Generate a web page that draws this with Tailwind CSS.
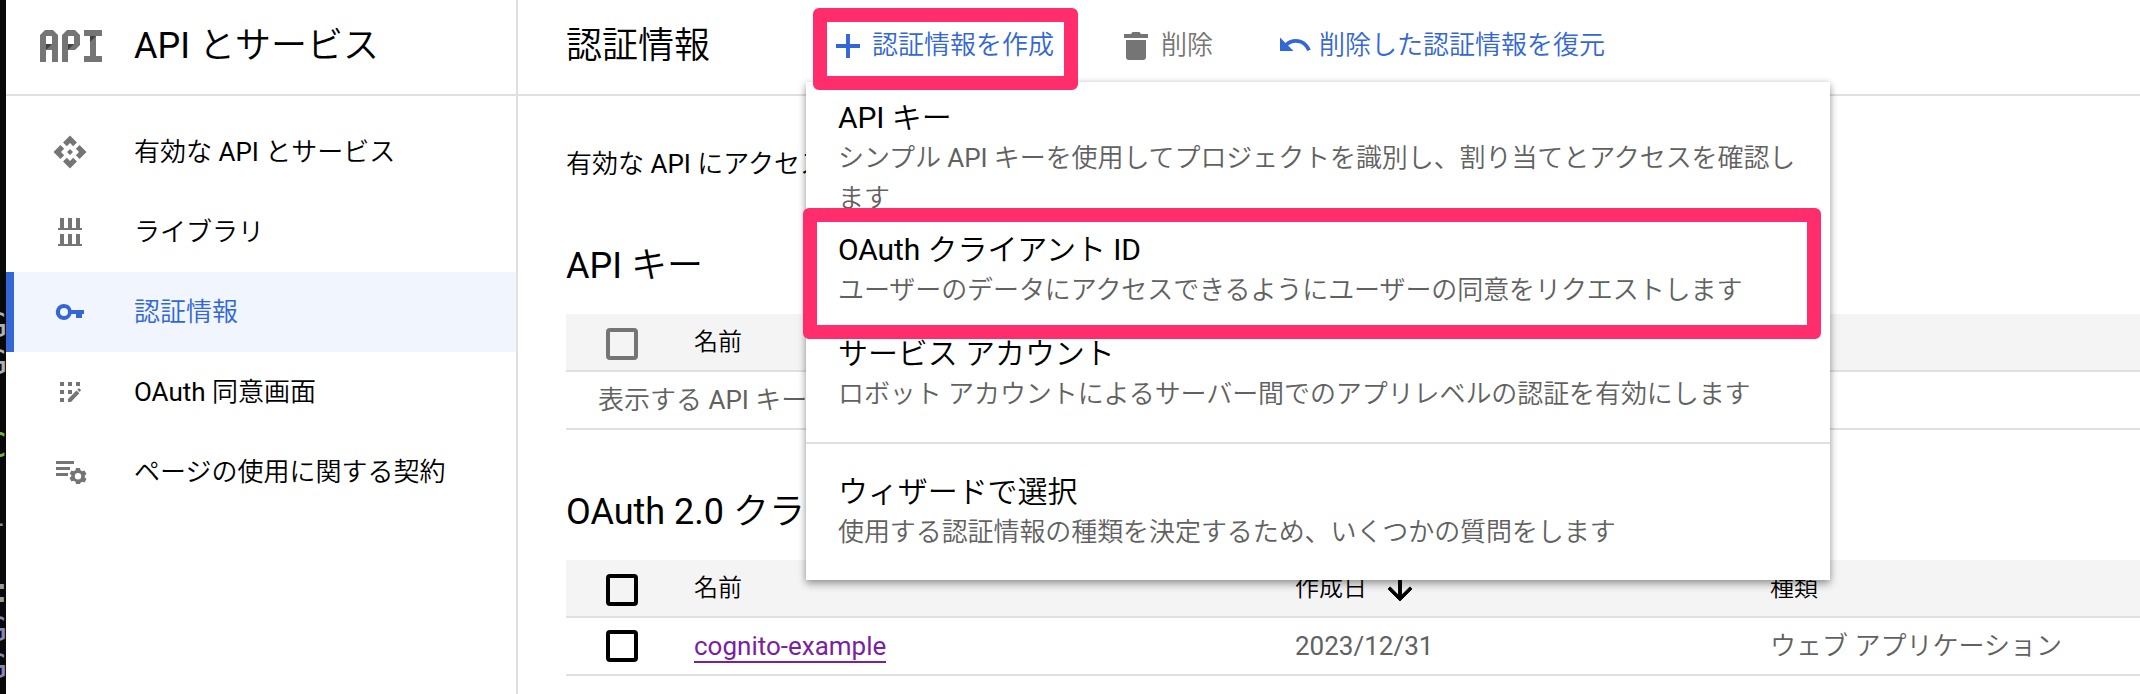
<!DOCTYPE html>
<html lang="ja">
<head>
<meta charset="utf-8">
<title>API とサービス</title>
<script src="https://cdn.jsdelivr.net/npm/@tailwindcss/browser@4"></script>
</head>
<body class="relative flex h-[694px] w-[2140px] overflow-hidden bg-white font-['Roboto','Noto_Sans_CJK_JP_DemiLight','Noto_Sans_CJK_JP',sans-serif] text-[26px] leading-[40px] whitespace-nowrap text-black">

<!-- sliver of the terminal window behind -->
<div class="relative w-[6px] shrink-0 overflow-hidden bg-[#08090b] font-['DejaVu_Sans_Mono',monospace] text-[34px] leading-none">
  <span class="absolute top-[308px] -right-px text-[#b0b0b0]">G</span>
  <span class="absolute top-[345px] -right-px text-[#b0b0b0]">G</span>
  <span class="absolute top-[428px] -right-px text-[#77b33c]">C</span>
  <span class="absolute top-[497px] right-0 text-[#8c8c8c]">l</span>
  <span class="absolute top-[573px] right-[-6px] text-[#9a9a9a]">:</span>
  <span class="absolute top-[612px] -right-px text-[#8886b4]">G</span>
  <span class="absolute top-[649px] -right-px text-[#8886b4]">G</span>
</div>

<aside class="flex w-[512px] shrink-0 flex-col border-r-2 border-[#e0e0e0]">
  <header class="flex h-24 items-center border-b-2 border-[#e0e0e0] pb-0.5 pl-[34px] text-[36px]">
    <svg class="mr-8 h-8 w-[62px]" viewBox="0 0 62 32" fill="#757575">
      <path fill-rule="evenodd" d="M0 32V5l5-5h8l5 5v27h-6V20H6v12zM6 14h6V6H6z"/>
      <path fill-rule="evenodd" d="M22 32V5l5-5h8l5 5v10l-5 5h-7v12zM28 14h6V6h-6z"/>
      <path d="M44 0h18v6h-6v20h6v6H44v-6h6V6h-6z"/>
      <path fill="#424242" d="M6 20v-6h6zM28 20v-6h6zM50 12V6h6z"/>
    </svg>
    <h1>API とサービス</h1>
  </header>
  <nav class="flex flex-col pt-4">
    <a class="flex h-20 items-center gap-[46px] pl-[46px]">
      <svg class="size-9" viewBox="0 0 24 24" fill="#757575"><path d="M14 12l-2 2-2-2 2-2 2 2zm-2-6l2.120 2.120 2.500-2.500L12 1 7.380 5.620l2.500 2.500L12 6zm-6 6l2.120-2.120-2.500-2.500L1 12l4.620 4.620 2.500-2.500L6 12zm12 0l-2.120 2.120 2.500 2.500L23 12l-4.620-4.620-2.500 2.500L18 12zm-6 6l-2.120-2.120-2.500 2.500L12 23l4.620-4.620-2.500-2.500L12 18z"/></svg>
      <span>有効な API とサービス</span>
    </a>
    <a class="flex h-20 items-center gap-[46px] pl-[46px]">
      <svg class="size-9" viewBox="0 0 36 36" fill="#757575"><path d="M8 4h4v10h4V4h4v10h4V4h4v10h2v2H6v-2h2zM8 20h4v10h4V20h4v10h4V20h4v10h2v2H6v-2h2z"/></svg>
      <span>ライブラリ</span>
    </a>
    <a class="flex h-20 items-center gap-[46px] border-l-8 border-[#3367d6] bg-[#f0f5fe] pl-[38px] text-[#3367d6]">
      <svg class="size-9" viewBox="0 0 36 36" fill="#3367d6"><path fill-rule="evenodd" d="M12 10a8 8 0 0 1 7.500 6H32v4h-2v4h-6v-4h-4.500A8 8 0 1 1 12 10zm0 4a4 4 0 1 0 0 8a4 4 0 0 0 0-8z"/></svg>
      <span>認証情報</span>
    </a>
    <a class="flex h-20 items-center gap-[46px] pl-[46px]">
      <svg class="size-9" viewBox="0 0 36 36" fill="#757575"><path d="M8 8h4v4H8zM16 8h4v4h-4zM24 8h4v4h-4zM8 16h4v4H8zM16 16h4v4h-4zM8 24h4v4H8zM16 28v-3l8.500-8.500 2.800 2.800L19 28zM25.300 15.700l1.200-1.200q.5-.4 1 0l1.200 1.200q.5.5 0 1l-1.200 1.200z"/></svg>
      <span>OAuth 同意画面</span>
    </a>
    <a class="flex h-20 items-center gap-[46px] pl-[46px]">
      <svg class="size-9" viewBox="0 0 36 36" fill="#757575"><path d="M4 7h18v3H4zM4 13h14v3H4zM4 19h12v3H4z"/>
        <path fill-rule="evenodd" d="M24 14h4l.5 2.300 1.800 1 2.200-.7 2 3.400-1.700 1.500v2l1.700 1.500-2 3.400-2.200-.7-1.800 1L28 30h-4l-.5-2.300-1.800-1-2.200.7-2-3.400 1.700-1.500v-2L17.500 20l2-3.400 2.200.7 1.800-1zM26 19a3.200 3.200 0 1 0 0 6.400a3.200 3.200 0 0 0 0-6.400z"/></svg>
      <span>ページの使用に関する契約</span>
    </a>
  </nav>
</aside>

<main class="flex min-w-0 flex-1 flex-col">
  <header class="flex h-24 shrink-0 items-center border-b-2 border-[#e0e0e0] pb-1 pl-12">
    <h2 class="w-[264px] pt-0.5 text-[36px]">認証情報</h2>
    <button class="flex w-[288px] items-center gap-1.5 text-[#3367d6]">
      <svg class="mt-0.5 size-9" viewBox="0 0 24 24" fill="#3367d6"><path d="M20 13.300h-6.700V20h-2.600v-6.700H4v-2.600h6.700V4h2.600v6.700H20z"/></svg>
      <span>認証情報を作成</span>
    </button>
    <button class="flex w-[160px] items-center gap-[7px] text-[#757575]">
      <svg class="mt-0.5 size-9" viewBox="0 0 36 36" fill="#757575"><path d="M8 12h20v17q0 3-3 3H11q-3 0-3-3zM6 6h7l1.500-2h7L23 6h7v4H6z"/></svg>
      <span>削除</span>
    </button>
    <button class="-ml-px flex items-center gap-1.5 text-[#3367d6]">
      <svg class="size-9" viewBox="0 0 24 24" fill="#3367d6"><path d="M12.500 8c-2.650 0-5.050.990-6.900 2.600L2 7v9h9l-3.620-3.620c1.390-1.160 3.160-1.880 5.120-1.880 3.540 0 6.550 2.310 7.600 5.500l2.370-.780C21.080 11.030 17.150 8 12.500 8z"/></svg>
      <span>削除した認証情報を復元</span>
    </button>
  </header>

  <div class="flex flex-col pl-12">
    <p class="mt-12">有効な API にアクセス</p>

    <h3 class="mt-[62px] h-[68px] text-[36px]">API キー</h3>
    <div class="flex h-[58px] items-center border-b-2 border-[#e0e0e0] bg-[#f4f4f4] pl-10 text-[24px]">
      <span class="mt-[4px] mr-14 size-8 rounded-[4px] border-4 border-[#757575]"></span>
      <span>名前</span>
    </div>
    <div class="flex h-[58px] items-center border-b-2 border-[#e0e0e0] pl-8 text-[#616161]">表示する API キー</div>

    <h3 class="mt-[62px] h-[68px] text-[36px]">OAuth 2.0 クラ</h3>
    <div class="flex h-[58px] items-center border-b-2 border-[#e0e0e0] bg-[#f4f4f4] pl-10 text-[24px]">
      <span class="mt-[4px] mr-14 size-8 rounded-[4px] border-4 border-black"></span>
      <span class="w-[601px]">名前</span>
      <span class="flex w-[475px] items-center gap-[15px]">作成日
        <svg class="mt-[2px] size-9" viewBox="0 0 24 24"><path d="M20 12l-1.410-1.410L13 16.170V4h-2v12.170l-5.580-5.590L4 12l8 8 8-8z" stroke="#000" stroke-width=".6"/></svg>
      </span>
      <span>種類</span>
    </div>
    <div class="flex h-[58px] items-center border-b-2 border-[#e0e0e0] pl-10 text-[#616161]">
      <span class="mr-14 size-8 rounded-[4px] border-4 border-black"></span>
      <span class="flex w-[601px]"><a class="h-[33px] border-b-2 border-[#7b1fa2] leading-[32px] text-[#7b1fa2]">cognito-example</a></span>
      <span class="w-[475px]">2023/12/31</span>
      <span>ウェブ アプリケーション</span>
    </div>
  </div>
</main>

<!-- create-credentials menu -->
<div class="absolute top-[82px] left-[806px] flex h-[498px] w-[1024px] flex-col bg-white tracking-[-0.08px] shadow-[0_4px_8px_rgba(0,0,0,0.35),0_0_6px_rgba(0,0,0,0.12)]">
  <div class="h-[132px] px-8 pt-4">
    <div class="text-[30px]">API キー</div>
    <div class="text-[#616161]">シンプル API キーを使用してプロジェクトを識別し、割り当てとアクセスを確認し<br>ます</div>
  </div>
  <div class="h-[104px] px-8 pt-4">
    <div class="text-[30px]">OAuth クライアント ID</div>
    <div class="text-[#616161]">ユーザーのデータにアクセスできるようにユーザーの同意をリクエストします</div>
  </div>
  <div class="h-[126px] border-b-2 border-[#e0e0e0] px-8 pt-4">
    <div class="text-[30px]">サービス アカウント</div>
    <div class="text-[#616161]">ロボット アカウントによるサーバー間でのアプリレベルの認証を有効にします</div>
  </div>
  <div class="px-8 pt-7">
    <div class="text-[30px]">ウィザードで選択</div>
    <div class="text-[#616161]">使用する認証情報の種類を決定するため、いくつかの質問をします</div>
  </div>
</div>

<!-- highlight frames -->
<div class="absolute top-[8px] left-[812.5px] h-[82px] w-[265px] rounded-[6px] border-[14px] border-[#ff2d6b]"></div>
<div class="absolute top-[208px] left-[802.5px] h-[130.500px] w-[1018px] rounded-[6px] border-[14px] border-[#ff2d6b]"></div>

</body>
</html>
